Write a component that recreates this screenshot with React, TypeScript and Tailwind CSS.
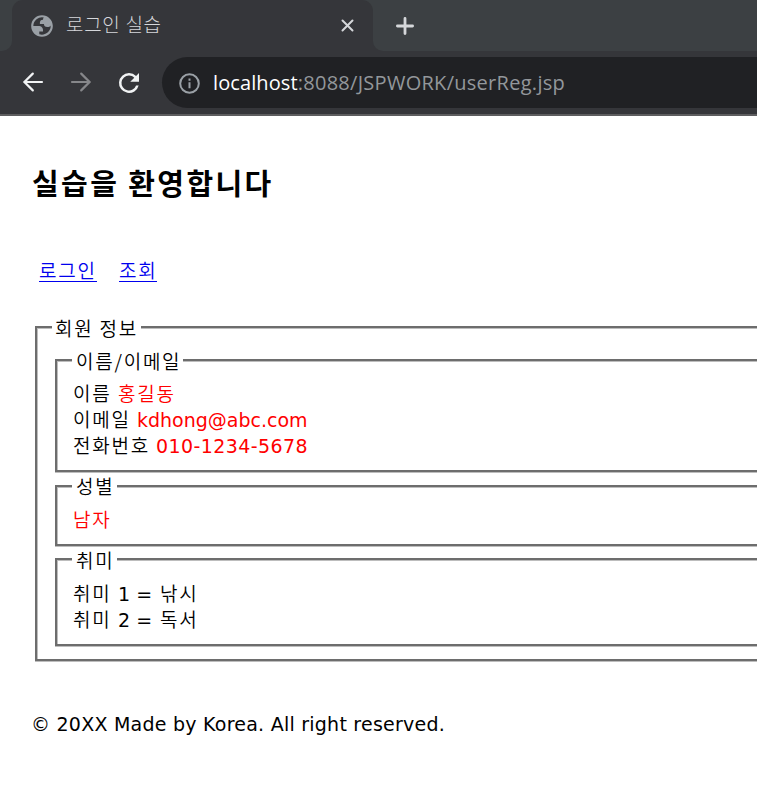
import type { ReactNode } from "react";

function Ko({ children, className = "" }: { children: ReactNode; className?: string }) {
  return (
    <span className={`whitespace-pre font-['Noto_Sans_CJK_KR',sans-serif] text-[19px] font-[350] tracking-[1.75px] ${className}`}>
      {children}
    </span>
  );
}

function Group({ legend, className, children }: { legend: ReactNode; className: string; children: ReactNode }) {
  return (
    <section
      className={`border-2 border-r-0 border-[#6d6d6d] shadow-[inset_1px_1px_0_#bdbdbd,0_1px_0_#bdbdbd] ${className}`}
    >
      {legend}
      {children}
    </section>
  );
}

function Browser() {
  return (
    <header className="h-[116px] border-b-2 border-[#5d5d5f] bg-[#35363a]">
      <div className="flex h-[51px]">
        <div className="w-3 rounded-br-[10px] bg-[#3c4043]" />
        <div className="bg-[#3c4043]">
          <div className="flex h-[51px] w-[361px] items-center rounded-t-[11px] bg-[#35363a]">
            <svg className="ml-[17px] mt-px" width="26" height="26" viewBox="0 0 24 24" fill="#9aa0a6" fillRule="evenodd">
              <path d="M12 2C6.48 2 2 6.48 2 12s4.48 10 10 10 10-4.48 10-10S17.52 2 12 2zM4 12h4.4c3.407.022 4.922 1.73 4.543 5.127H9.488v2.47a8.004 8.004 0 0 0 10.498-8.083C19.327 12.504 18.332 13 17 13c-2.137 0-3.206-.916-3.206-2.75h-3.748c-.274-2.728.683-4.092 2.87-4.092 0-.975.327-1.597.811-1.97A8.004 8.004 0 0 0 4 12z" />
            </svg>
            <span className="mb-[3px] ml-[11px] w-[270px] whitespace-pre font-['Noto_Sans_CJK_KR',sans-serif] text-[19px] font-light leading-[28px] tracking-[0.7px] text-[#d5d7da]">
              로그인 실습
            </span>
            <svg className="ml-[5px]" width="13" height="13" viewBox="0 0 13 13" stroke="#d5d7da" strokeWidth="2" strokeLinecap="round">
              <path d="M1.5 1.5l10 10M11.5 1.5l-10 10" />
            </svg>
          </div>
        </div>
        <div className="flex flex-1 items-center rounded-bl-[10px] bg-[#3c4043] pl-[23px]">
          <svg width="18" height="18" viewBox="0 0 18 18" stroke="#d5d7da" strokeWidth="2.8" strokeLinecap="round">
            <path d="M9 1.4v15.2M1.4 9h15.2" />
          </svg>
        </div>
      </div>
      <div className="flex h-[63px] items-center pl-[22px]">
        <svg className="mb-px" width="22" height="22" viewBox="0 0 22 22" fill="none" stroke="#f1f3f4" strokeWidth="2.2" strokeLinecap="round">
          <path d="M20 11H2.5M10.8 2.6l-8.4 8.4 8.4 8.4" />
        </svg>
        <svg className="mb-px ml-[26px]" width="22" height="22" viewBox="0 0 22 22" fill="none" stroke="#86878a" strokeWidth="2.2" strokeLinecap="round">
          <path d="M2 11h17.5M11.2 2.6l8.4 8.4-8.4 8.4" />
        </svg>
        <svg className="ml-[22px]" width="30" height="30" viewBox="0 0 24 24" fill="#f1f3f4">
          <path d="M17.65 6.35A7.96 7.96 0 0 0 12 4a8 8 0 1 0 7.73 10h-2.08A6 6 0 1 1 12 6c1.66 0 3.14.69 4.22 1.78L13 11h7V4l-2.35 2.35z" />
        </svg>
        <div className="ml-[18px] flex h-[51px] flex-1 items-center rounded-l-full bg-[#202124] pl-[17px]">
          <svg className="mt-px" width="21" height="21" viewBox="0 0 21 21" fill="none" stroke="#9aa0a6" strokeWidth="2">
            <circle cx="10.5" cy="10.5" r="9.3" />
            <path d="M10.5 9.3v6M10.5 5.5v2.2" />
          </svg>
          <span className="ml-[13px] whitespace-pre font-['Open_Sans',sans-serif] text-[20px] leading-[30px] tracking-[0.28px] text-[#93979b]">
            <span className="font-medium tracking-[0.1px] text-white">localhost</span>:8088/JSPWORK/userReg.jsp
          </span>
        </div>
      </div>
    </header>
  );
}

export default function App() {
  return (
    <div className="h-[790px] w-[757px] overflow-hidden bg-white font-['DejaVu_Sans',sans-serif] text-[19px] text-black">
      <Browser />
      <main className="pl-[33px]">
        <h1 className="-ml-px mt-[44px] h-[44px] whitespace-pre font-['Noto_Sans_CJK_KR',sans-serif] text-[29px] font-bold leading-[44px] tracking-[2.4px]">
          실습을 환영합니다
        </h1>
        <nav className="mt-[52px] flex h-[28px] gap-[22px] pl-[6px] leading-[28px] text-[#0000ee]">
          <a href="#login" className="h-[26px] w-[58px] border-b border-current"><Ko>로그인</Ko></a>
          <a href="#list" className="h-[26px] w-[38px] border-b border-current"><Ko>조회</Ko></a>
        </nav>
        <Group
          className="ml-[2px] mt-[42px] h-[335px] pl-[18px]"
          legend={<div className="relative -ml-[3px] -mt-[14px] h-[28px] w-[89px] bg-white pl-[3px] leading-[28px]"><Ko>회원 정보</Ko></div>}
        >
          <Group
            className="mt-[17px] h-[113px] pl-[16px]"
            legend={<div className="relative -ml-px -mt-[14px] h-[28px] w-[111px] bg-white pl-[4px] leading-[28px]"><Ko className="tracking-[1.6px]">이름/이메일</Ko></div>}
          >
            <div className="mt-[5px] leading-[26px] text-[#ff0000]">
              <div className="flex h-[26px] whitespace-pre"><Ko className="w-[45px] text-black">이름</Ko><Ko>홍길동</Ko></div>
              <div className="flex h-[26px] whitespace-pre"><Ko className="w-[64px] text-black">이메일</Ko><span className="pt-px">kdhong@abc.com</span></div>
              <div className="flex h-[26px] whitespace-pre"><Ko className="w-[83px] text-black">전화번호</Ko><span className="pt-px tracking-[0.4px]">010-1234-5678</span></div>
            </div>
          </Group>
          <Group
            className="mt-[13px] h-[61px] pl-[16px]"
            legend={<div className="relative -ml-px -mt-[12px] h-[24px] w-[45px] bg-white pl-[4px] leading-[22px]"><Ko>성별</Ko></div>}
          >
            <div className="mt-[7px] h-[26px] leading-[26px] text-[#ff0000]"><Ko>남자</Ko></div>
          </Group>
          <Group
            className="mt-[12px] h-[88px] pl-[16px]"
            legend={<div className="relative -ml-px -mt-[12px] h-[24px] w-[45px] bg-white pl-[4px] leading-[23px]"><Ko>취미</Ko></div>}
          >
            <div className="mt-[8px] leading-[26px]">
              <div className="flex h-[26px] whitespace-pre"><Ko className="w-[45px]">취미</Ko><span className="w-[42px] pt-px">1 =</span><Ko>낚시</Ko></div>
              <div className="flex h-[26px] whitespace-pre"><Ko className="w-[45px]">취미</Ko><span className="w-[42px] pt-px">2 =</span><Ko>독서</Ko></div>
            </div>
          </Group>
        </Group>
        <footer className="-ml-[2px] mt-[49px] h-[28px] whitespace-pre leading-[28px] tracking-[0.24px]">© 20XX Made by Korea. All right reserved.</footer>
      </main>
    </div>
  );
}
